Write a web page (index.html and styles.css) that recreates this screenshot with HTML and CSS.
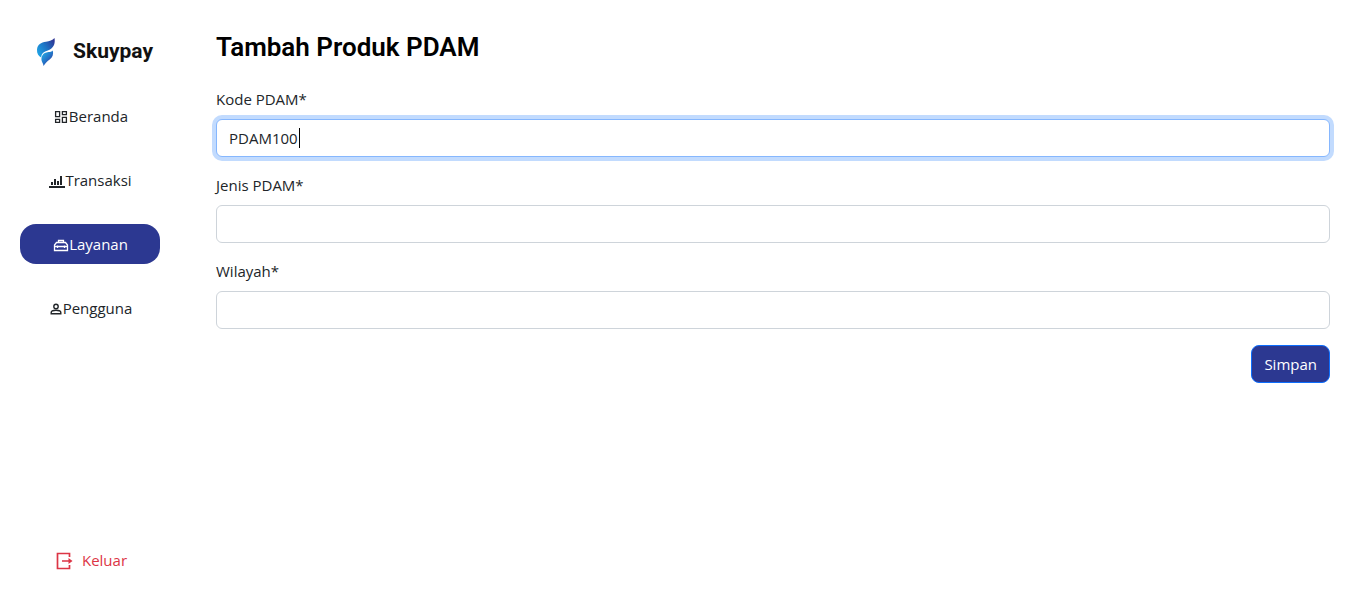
FILE: index.html
```html
<!DOCTYPE html>
<html lang="id">
<head>
<meta charset="utf-8">
<meta name="viewport" content="width=device-width, initial-scale=1">
<title>Tambah Produk PDAM</title>
<link rel="stylesheet" href="styles.css">
</head>
<body>
<div class="layout">
  <aside class="sidebar">
    <a class="brand" href="#">
      <svg class="brand-mark" width="20" height="30" viewBox="0 0 20 30" aria-hidden="true">
        <defs>
          <linearGradient id="wing" x1="0" y1="0.8" x2="1" y2="0.1"><stop offset="0" stop-color="#1fa5e6"/><stop offset="0.5" stop-color="#1e74c4"/><stop offset="1" stop-color="#2f3192"/></linearGradient>
          <linearGradient id="tail" x1="0.1" y1="0" x2="0.8" y2="0.8"><stop offset="0" stop-color="#24b5ea"/><stop offset="0.6" stop-color="#2475c8"/><stop offset="1" stop-color="#2e3f9f"/></linearGradient>
        </defs>
        <path fill="url(#wing)" d="M18.500 1c.8 5-.4 9-4.500 11.500-3 1.600-6 1.800-7.500 4-1 1.300-1.300 2.500-1.200 4C2.500 19 .7 16.500 1 12.500 1.500 7.500 5 5.500 10 4.700 13.500 4 16.500 3.200 18.500 1z"/>
        <path fill="url(#tail)" d="M16.800 13.500c.9 4-.3 7-3.100 9-2.400 1.700-4.200 3.500-6.200 6.500-.3-2-.9-3-1.500-4.200-.9-2-.7-4.200.2-6 1.300-2.600 3.500-3.300 6.300-3.700 1.700-.2 3.200-.4 4.300-1.600z"/>
      </svg>
      <span>Skuypay</span>
    </a>
    <nav class="nav">
      <a class="nav-link" href="#">
        <svg width="16" height="16" viewBox="0 0 16 16" fill="none" stroke="currentColor" stroke-width="1.300" aria-hidden="true"><path d="M2.600 2.600h4v5h-4zM9.400 2.600h4v3h-4zM2.600 10.400h4v3h-4zM9.400 8.400h4v5h-4z"/></svg>
        <span>Beranda</span>
      </a>
      <a class="nav-link" href="#">
        <svg width="16" height="16" viewBox="0 0 16 16" fill="currentColor" aria-hidden="true"><path d="M0 13h16v2H0zM2 9h2v3H2zM5 6h2v6H5zM8 8h2v4H8zM11 3h2v9h-2z"/></svg>
        <span>Transaksi</span>
      </a>
      <a class="nav-link active" href="#" aria-current="page">
        <svg width="16" height="16" viewBox="0 0 16 16" fill="none" stroke="currentColor" stroke-width="1.300" aria-hidden="true"><path d="M5.500 5.500v-2h5v2M3.500 5.500h9l2 2.500v5.500h-13V8zM1.500 9.500h13M4.500 8.500v2.500M11.500 8.500v2.500"/></svg>
        <span>Layanan</span>
      </a>
      <a class="nav-link" href="#">
        <svg width="14" height="14" viewBox="0 0 14 14" fill="none" stroke="currentColor" stroke-width="1.400" aria-hidden="true"><circle cx="7" cy="4.500" r="2.200"/><path d="M2.200 11.800v-1.300c0-1.300 2.500-2.200 4.800-2.200s4.800.9 4.800 2.200v1.300z"/></svg>
        <span>Pengguna</span>
      </a>
    </nav>
    <a class="nav-link logout" href="#">
      <svg width="20" height="20" viewBox="0 0 20 20" fill="none" stroke="currentColor" stroke-width="1.700" aria-hidden="true"><path d="M15.500 6V2.500H3.500v15h12V14M8 10h9"/><path fill="currentColor" stroke="none" d="M14.500 7l4 3-4 3z"/></svg>
      <span>Keluar</span>
    </a>
  </aside>
  <main class="content">
    <h1 class="title">Tambah Produk PDAM</h1>
    <form class="form">
      <div class="field">
        <label for="kode">Kode PDAM*</label>
        <div class="control">
          <input class="input focused" id="kode" type="text" value="PDAM100">
          <span class="caret"></span>
        </div>
      </div>
      <div class="field">
        <label for="jenis">Jenis PDAM*</label>
        <input class="input" id="jenis" type="text">
      </div>
      <div class="field">
        <label for="wilayah">Wilayah*</label>
        <input class="input" id="wilayah" type="text">
      </div>
      <button class="submit" type="submit">Simpan</button>
    </form>
  </main>
</div>
</body>
</html>
```
FILE: styles.css
```css
* {
  box-sizing: border-box;
}

body {
  margin: 0;
  background: #fff;
  color: #212529;
  font-family: "Segoe UI", "Open Sans", "Noto Sans", sans-serif;
  font-size: 15px;
  line-height: 24px;
}

.layout {
  display: flex;
  min-height: 100vh;
}

.sidebar {
  display: flex;
  flex: none;
  flex-direction: column;
  width: 180px;
  padding: 32px 20px 24px;
}

.brand {
  display: flex;
  align-items: center;
  gap: 17px;
  height: 38px;
  margin-bottom: 26px;
  padding-left: 16px;
  color: #111;
  font-family: Roboto, sans-serif;
  font-size: 21px;
  font-weight: 700;
  text-decoration: none;
}

.brand-mark {
  margin-top: 2px;
}

.nav {
  display: flex;
  flex-direction: column;
  gap: 24px;
}

.nav-link {
  display: flex;
  align-items: center;
  justify-content: center;
  height: 40px;
  padding-left: 1px;
  border-radius: 16px;
  color: #212529;
  text-decoration: none;
}

.nav-link svg {
  flex: none;
  margin-top: 2px;
}

.nav-link.active {
  background: #2c3891;
  color: #fff;
}

.nav-link.logout {
  gap: 8px;
  margin-top: auto;
  color: #dc3545;
}

.content {
  flex: 1;
  min-width: 0;
  padding: 31px 36px 24px;
}

.title {
  margin: 0 0 24px;
  color: #000;
  font-family: Roboto, sans-serif;
  font-size: 26px;
  font-weight: 600;
  line-height: 32px;
}

.form {
  display: flex;
  flex-direction: column;
  gap: 16px;
}

.field {
  display: flex;
  flex-direction: column;
  gap: 8px;
}

.control {
  position: relative;
}

.input {
  display: block;
  width: 100%;
  height: 38px;
  padding: 6px 12px;
  border: 1px solid #ced4da;
  border-radius: 6px;
  outline: 0;
  background: #fff;
  color: inherit;
  font: inherit;
}

.input:focus,
.input.focused {
  border-color: #86b7fe;
  box-shadow: 0 0 0 4px #c2dbfe;
}

.caret {
  position: absolute;
  top: 9px;
  left: 83px;
  width: 1px;
  height: 20px;
  background: #000;
}

.submit {
  align-self: flex-end;
  height: 38px;
  padding: 6px 12px;
  border: 1px solid #0d6efd;
  border-radius: 8px;
  background: #2c3891;
  color: #fff;
  font: inherit;
}
```
